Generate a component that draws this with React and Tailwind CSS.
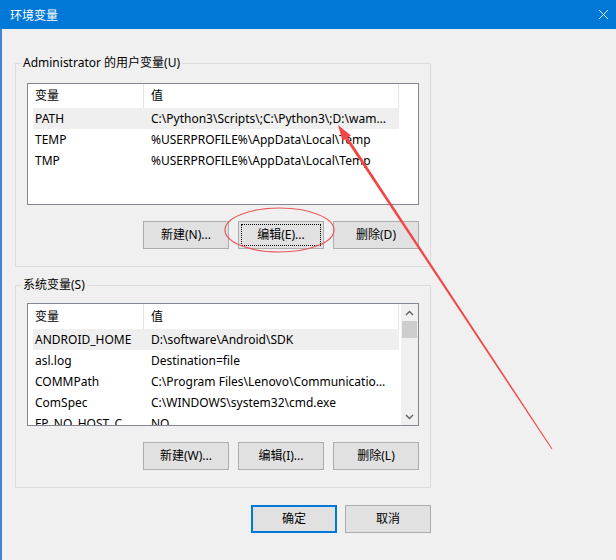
import { X } from 'lucide-react'

const userVars = [
  ['PATH', 'C:\\Python3\\Scripts\\;C:\\Python3\\;D:\\wamp64\\bin\\php\\php7.0.10;C:\\Users'],
  ['TEMP', '%USERPROFILE%\\AppData\\Local\\Temp'],
  ['TMP', '%USERPROFILE%\\AppData\\Local\\Temp'],
]

const systemVars = [
  ['ANDROID_HOME', 'D:\\software\\Android\\SDK'],
  ['asl.log', 'Destination=file'],
  ['COMMPath', 'C:\\Program Files\\Lenovo\\Communications Utility\\'],
  ['ComSpec', 'C:\\WINDOWS\\system32\\cmd.exe'],
  ['FP_NO_HOST_CHECK', 'NO'],
]

function WinButton({ children, focused, primary }) {
  return (
    <button
      className={`w-[86px] h-[28px] bg-[#e1e1e1] flex items-center justify-center p-[2px] ${
        primary ? 'border-2 border-[#0078d7]' : 'border border-[#adadad]'
      }`}
    >
      <span
        className={`w-full h-full flex items-center justify-center ${
          focused ? 'border border-dotted border-black' : 'border border-transparent'
        }`}
      >
        {children}
      </span>
    </button>
  )
}

function Chevron({ up }) {
  return (
    <svg width="9" height="6" viewBox="0 0 9 6" fill="none" stroke="#606060" strokeWidth="1.4">
      <path d={up ? 'M1 5l3.5-3.5L8 5' : 'M1 1l3.5 3.5L8 1'} />
    </svg>
  )
}

function VarList({ rows, height, headerHeight, scrollbar }) {
  return (
    <div className="border border-[#828790] bg-white flex overflow-hidden" style={{ height }}>
      <div className="flex-1 flex flex-col min-w-0">
        <div className="flex shrink-0" style={{ height: headerHeight }}>
          <div className="w-[116px] pl-[7px] flex items-center border-r border-[#e5e5e5]">变量</div>
          <div className="w-[255px] pl-[7px] flex items-center border-r border-[#e5e5e5]">值</div>
        </div>
        {rows.map(([name, value], i) => (
          <div key={name} className="flex h-[21px] shrink-0 pl-[5px]">
            <div className={`flex w-[366px] items-center ${i === 0 ? 'bg-[#efefef]' : ''}`}>
              <div className="w-[111px] pl-[2px] pr-[4px] truncate">{name}</div>
              <div className="w-[248px] pl-[7px] truncate">{value}</div>
            </div>
          </div>
        ))}
      </div>
      {scrollbar && (
        <div className="w-[17px] bg-[#f0f0f0] flex flex-col items-center shrink-0">
          <div className="h-[17px] flex items-center justify-center">
            <Chevron up />
          </div>
          <div className="w-[15px] h-[17px] bg-[#cdcdcd]" />
          <div className="flex-1" />
          <div className="h-[17px] flex items-center justify-center">
            <Chevron />
          </div>
        </div>
      )}
    </div>
  )
}

function GroupBox({ title, children, className }) {
  return (
    <fieldset className={`w-[416px] border border-[#dcdcdc] px-[11px] pb-[17px] ${className}`}>
      <legend className="ml-[-6px] px-[2px] leading-[16px]">{title}</legend>
      {children}
    </fieldset>
  )
}

export default function App() {
  return (
    <div className="w-[616px] h-[560px] bg-[#f0f0f0] relative overflow-hidden text-[12px] text-black font-['Noto_Sans','Noto_Sans_CJK_SC',sans-serif]">
      {/* Title bar */}
      <div className="h-[29px] bg-[#0078d7] flex items-center justify-between pl-[10px] pr-[4px] text-white">
        <span className="font-['Noto_Sans_CJK_SC',sans-serif]">环境变量</span>
        <X size={17} strokeWidth={1.2} />
      </div>

      <div className="h-[531px] border-l-2 border-[#3d87d6] pl-[13px] flex flex-col">
        <GroupBox title="Administrator 的用户变量(U)" className="mt-[26px]">
          <div className="mt-[12px]">
            <VarList rows={userVars} height={122} headerHeight={24} />
          </div>
          <div className="mt-[16px] flex justify-end gap-[9px]">
            <WinButton>新建(N)...</WinButton>
            <WinButton focused>编辑(E)...</WinButton>
            <WinButton>删除(D)</WinButton>
          </div>
        </GroupBox>

        <GroupBox title="系统变量(S)" className="mt-[10px]">
          <div className="mt-[10px]">
            <VarList rows={systemVars} height={123} headerHeight={25} scrollbar />
          </div>
          <div className="mt-[16px] flex justify-end gap-[9px]">
            <WinButton>新建(W)...</WinButton>
            <WinButton>编辑(I)...</WinButton>
            <WinButton>删除(L)</WinButton>
          </div>
        </GroupBox>

        <div className="w-[416px] mt-[17px] flex justify-end gap-2">
          <WinButton primary>确定</WinButton>
          <WinButton>取消</WinButton>
        </div>
      </div>

      {/* Red annotation: ellipse around edit button and arrow */}
      <svg className="absolute inset-0 pointer-events-none" width="616" height="560" viewBox="0 0 616 560">
        <ellipse cx="279.5" cy="230" rx="54.5" ry="22" fill="none" stroke="#e85a5a" strokeWidth="1.2" />
        <polygon points="551.6,449.3 552.4,448.7 348.1,137.5 345.5,139.1" fill="#f24545" />
        <polygon points="338,125 342.6,141.1 351,135.5" fill="#f24545" />
      </svg>
    </div>
  )
}
